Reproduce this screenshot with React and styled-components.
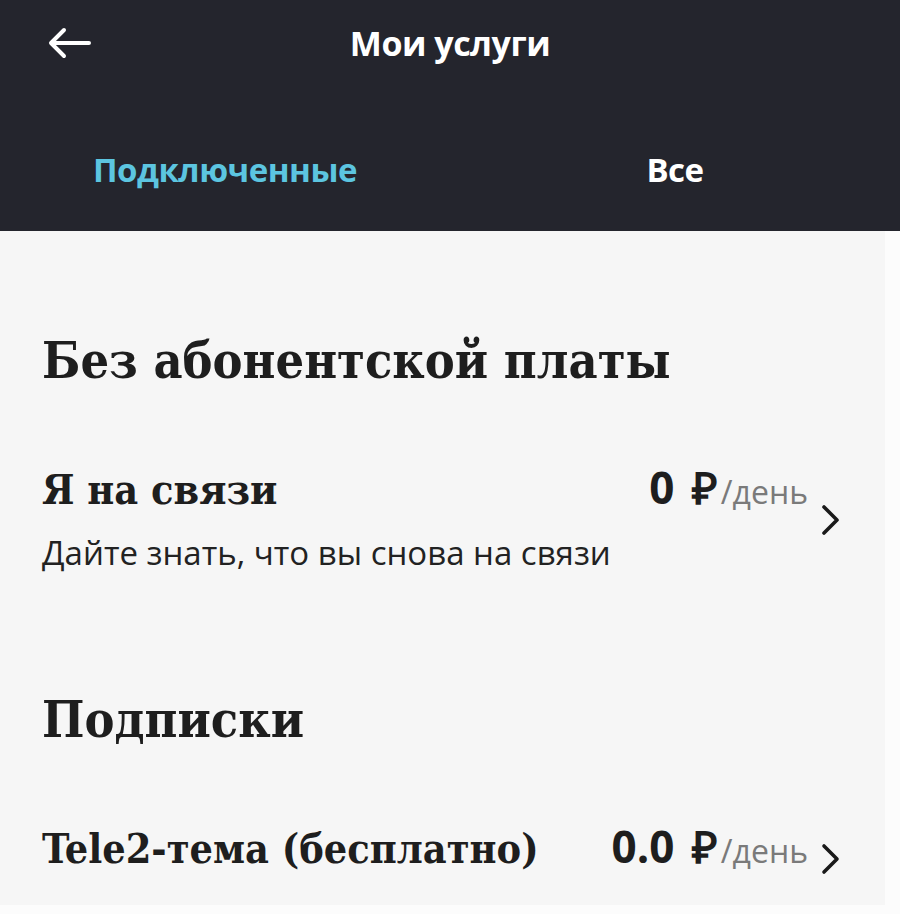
import styled, { createGlobalStyle } from "styled-components";

const GlobalStyle = createGlobalStyle`
  html, body {
    margin: 0;
    padding: 0;
    background: #fcfcfc;
  }
  * {
    box-sizing: border-box;
  }
`;

const Page = styled.div`
  width: 900px;
  height: 914px;
  overflow: hidden;
`;

const Header = styled.header`
  background: #24252d;
  height: 231px;
  display: flex;
  flex-direction: column;
  font-family: "Open Sans", sans-serif;
  font-weight: 700;
`;

const TopBar = styled.div`
  height: 86px;
  display: grid;
  grid-template-columns: 1fr auto 1fr;
  align-items: center;
  padding: 0 48px;
`;

const BackButton = styled.button`
  background: none;
  border: none;
  padding: 0;
  width: 46px;
  height: 34px;
  display: flex;
  align-items: center;
  cursor: pointer;
`;

const Title = styled.h1`
  margin: 0;
  color: #fff;
  font-size: 34px;
  font-weight: 700;
  letter-spacing: -0.5px;
`;

const Tabs = styled.nav`
  flex: 1;
  display: grid;
  grid-template-columns: 1fr 1fr;
  align-items: center;
  padding-top: 22px;
`;

const Tab = styled.div`
  text-align: center;
  font-size: 33px;
  letter-spacing: -0.5px;
  color: ${(props) => (props.$active ? "#5cc5e0" : "#fff")};
`;

const Content = styled.main`
  width: 885px;
  height: 674px;
  background: #f6f6f6;
  padding: 104px 37px 0 42px;
`;

const Section = styled.section`
  & + & {
    margin-top: 121px;
  }
`;

const Heading = styled.h2`
  margin: 0 0 70px;
  font-family: "DejaVu Serif", serif;
  font-stretch: condensed;
  font-weight: 700;
  font-size: 50px;
  line-height: 52px;
  color: #1e1e1e;
`;

const Item = styled.div`
  display: grid;
  grid-template-columns: 1fr auto 40px;
  align-items: baseline;
  row-gap: 16px;
`;

const ItemTitle = styled.div`
  font-family: "DejaVu Serif", serif;
  font-stretch: condensed;
  font-weight: 700;
  font-size: 41px;
  line-height: 44px;
  color: #1e1e1e;
`;

const ItemDesc = styled.div`
  grid-column: 1 / 3;
  font-family: "Open Sans", sans-serif;
  font-size: 33px;
  line-height: 40px;
  color: #222;
`;

const Price = styled.div`
  font-family: "Open Sans", sans-serif;
  white-space: nowrap;
  color: #1e1e1e;
`;

const Amount = styled.span`
  font-size: 44px;
  font-weight: 700;
  word-spacing: 6px;
  margin-right: 3px;
`;

const Per = styled.span`
  font-size: 32px;
  color: #7a7a7a;
`;

const Chevron = styled.div`
  grid-column: 3;
  grid-row: 1 / 3;
  align-self: center;
  justify-self: start;
  margin-left: 11px;
  padding-top: 10px;
  display: flex;
`;

function ArrowLeft() {
  return (
    <svg width="44" height="32" viewBox="0 0 44 32" fill="none">
      <path d="M41 16H4M16 3L3 16l13 13" stroke="#fff" strokeWidth="4" strokeLinecap="round" strokeLinejoin="round" />
    </svg>
  );
}

function ChevronRight() {
  return (
    <svg width="22" height="32" viewBox="0 0 22 32" fill="none">
      <path d="M5 3l13 13L5 29" stroke="#1a1a1a" strokeWidth="3.6" strokeLinecap="round" strokeLinejoin="round" />
    </svg>
  );
}

export default function App() {
  return (
    <Page>
      <GlobalStyle />
      <Header>
        <TopBar>
          <BackButton aria-label="Назад">
            <ArrowLeft />
          </BackButton>
          <Title>Мои услуги</Title>
        </TopBar>
        <Tabs>
          <Tab $active>Подключенные</Tab>
          <Tab>Все</Tab>
        </Tabs>
      </Header>
      <Content>
        <Section>
          <Heading>Без абонентской платы</Heading>
          <Item>
            <ItemTitle>Я на связи</ItemTitle>
            <Price>
              <Amount>0 ₽</Amount>
              <Per>/день</Per>
            </Price>
            <Chevron>
              <ChevronRight />
            </Chevron>
            <ItemDesc>Дайте знать, что вы снова на связи</ItemDesc>
          </Item>
        </Section>
        <Section>
          <Heading>Подписки</Heading>
          <Item>
            <ItemTitle>Tele2-тема (бесплатно)</ItemTitle>
            <Price>
              <Amount>0.0 ₽</Amount>
              <Per>/день</Per>
            </Price>
            <Chevron>
              <ChevronRight />
            </Chevron>
          </Item>
        </Section>
      </Content>
    </Page>
  );
}
